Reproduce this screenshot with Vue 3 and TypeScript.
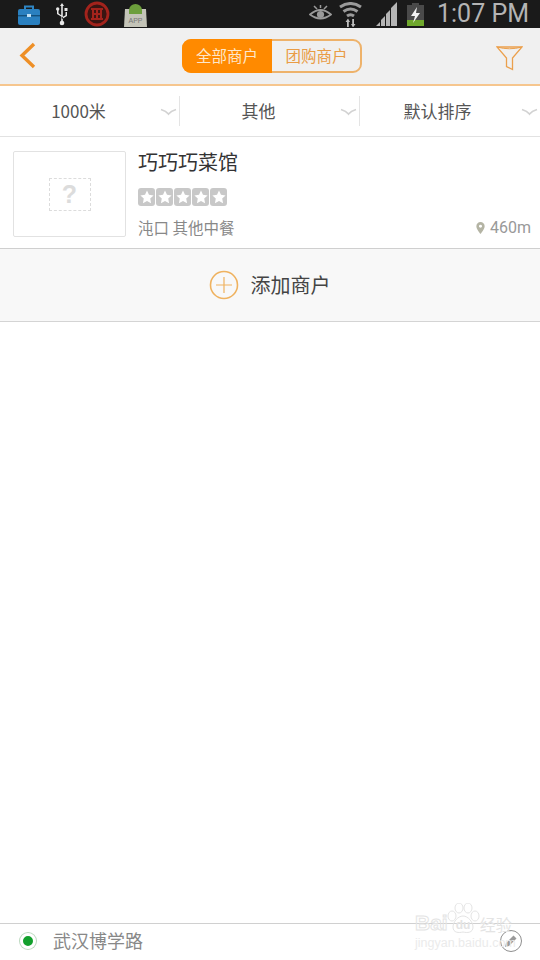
<template>
  <div class="page">
    <div class="status">
      <div class="status-left">
        <svg class="ic" width="22" height="22" viewBox="0 0 22 22">
          <path d="M7 6V3.500h8V6" fill="none" stroke="#2f86c4" stroke-width="2" />
          <rect x="0" y="6" width="22" height="16" rx="2" fill="#2a80c0" />
          <rect x="0" y="12" width="22" height="1.400" fill="#14507c" />
          <rect x="9" y="11" width="4" height="3" fill="#bfe0f5" />
        </svg>
        <svg class="ic" width="18" height="24" viewBox="0 0 18 24">
          <path d="M9 1l2 3H7zM8.200 4h1.600v16H8.200zM9 15l-5-3V8h1.500v3.200L8.500 13.500zM9 17l5-3v-4h-1.500v3.200l-4 2.300z" fill="#e8e8e8" />
          <circle cx="9" cy="21" r="2.300" fill="#e8e8e8" />
          <circle cx="4.700" cy="7" r="1.700" fill="#e8e8e8" />
          <rect x="11.500" y="6" width="3" height="3" fill="#e8e8e8" />
        </svg>
        <svg class="ic" width="26" height="26" viewBox="0 0 26 26">
          <circle cx="13" cy="13" r="11" fill="#3a1512" stroke="#a3231c" stroke-width="2.800" />
          <path d="M7 8h12M7 18h12M9 8v5h8V8M13 8v10M9 13v5M17 13v5" fill="none" stroke="#a3231c" stroke-width="2" />
        </svg>
        <svg class="ic" width="25" height="25" viewBox="0 0 25 25">
          <path d="M2 7h21l1 18H1z" fill="#c4c4b8" />
          <path d="M6 8a6.500 6 0 0 1 13 0v4H6z" fill="#6d9f3c" />
          <text x="12.500" y="21" text-anchor="middle" class="app-txt">APP</text>
        </svg>
      </div>
      <div class="status-right">
        <svg class="ic eye" width="23" height="18" viewBox="0 0 23 18">
          <path d="M1 9.500q10.500-9 21 0q-10.500 8-21 0z" fill="none" stroke="#9a9a9a" stroke-width="1.800" />
          <circle cx="11.500" cy="9.500" r="3.600" fill="#9a9a9a" />
          <path d="M5 1l3 3M11.500 0v3M18 1l-3 3" stroke="#9a9a9a" stroke-width="1.500" />
        </svg>
        <svg class="ic wifi" width="23" height="25" viewBox="0 0 23 25">
          <path d="M1 5q10.500-7 21 0M4.500 9.500q7-5 14 0M8 14q3.500-2.500 7 0" fill="none" stroke="#9a9a9a" stroke-width="3" />
          <path d="M6.500 20l2.500-3.500 2 3.500h-1.200v5H8v-5zM12 22h1.200v-5H15v5h1.500L14 25.500z" fill="#bdbdbd" />
        </svg>
        <svg class="ic signal" width="22" height="24" viewBox="0 0 22 24">
          <path d="M0 24l4-4v4zM5 24v-6l4-4v10zM10 24v-12l4-4v16zM15 24v-18l6-6v24z" fill="#b5b5b5" />
        </svg>
        <svg class="ic battery" width="17" height="23" viewBox="0 0 17 23">
          <rect x="5" y="0" width="7" height="3" fill="#4a4a4a" />
          <rect x="0" y="2" width="17" height="21" fill="#4a4a4a" />
          <rect x="0" y="17" width="17" height="6" fill="#6fa82c" />
          <path d="M10 4L4 13h4l-2 7 7-10H9z" fill="#f2f2f2" />
        </svg>
        <span class="time">1:07 PM</span>
      </div>
    </div>

    <header class="nav">
      <svg class="back" width="17" height="27" viewBox="0 0 17 27">
        <path d="M15 2L3 13.500 15 25" fill="none" stroke="#ee8f26" stroke-width="3.400" />
      </svg>
      <div class="seg">
        <span class="seg-item on">全部商户</span>
        <span class="seg-item">团购商户</span>
      </div>
      <svg class="funnel" width="27" height="25" viewBox="0 0 27 25">
        <path d="M1 1h25L16.500 12v11.500l-6-3V12z" fill="none" stroke="#eba04d" stroke-width="1.300" />
        <path d="M1 1q12.500 3.500 25 0" fill="none" stroke="#eba04d" stroke-width="1" />
      </svg>
    </header>

    <div class="filters">
      <div v-for="f in filters" :key="f" class="filter">
        <span class="filter-txt">{{ f }}</span>
        <svg class="caret" width="17" height="8" viewBox="0 0 17 8">
          <path d="M1 1.500q5 1.500 7.500 4.500q2.500-3 7.500-4.500" fill="none" stroke="#d2d2d2" stroke-width="1.800" />
        </svg>
      </div>
    </div>

    <div class="shop">
      <div class="thumb"><div class="holder">?</div></div>
      <div class="info">
        <div class="name">巧巧巧菜馆</div>
        <div class="stars">
          <span v-for="n in 5" :key="n" class="star">
            <svg width="14" height="14" viewBox="0 0 24 24">
              <path d="M12 1l3.400 7.300 7.900 1-5.800 5.400 1.500 7.900L12 18.700l-7 3.900 1.500-7.900L.7 9.300l7.900-1z" fill="#fff" />
            </svg>
          </span>
        </div>
        <div class="meta">
          <span>沌口 其他中餐</span>
          <span class="dist">
            <svg width="9" height="12" viewBox="0 0 9 13">
              <path d="M4.500 0A4.500 4.500 0 0 0 0 4.500C0 7.500 4.500 13 4.500 13S9 7.500 9 4.500A4.500 4.500 0 0 0 4.500 0z" fill="#b4b4a4" />
              <circle cx="4.500" cy="4.500" r="1.600" fill="#fff" />
            </svg>
            460m
          </span>
        </div>
      </div>
    </div>

    <div class="add">
      <svg width="30" height="30" viewBox="0 0 30 30">
        <circle cx="15" cy="15" r="13.500" fill="none" stroke="#efb25f" stroke-width="1.600" />
        <path d="M15 7v16M7 15h16" stroke="#efb25f" stroke-width="1.200" />
      </svg>
      <span class="add-txt">添加商户</span>
    </div>

    <div class="spacer"></div>

    <footer class="foot">
      <span class="dot"></span>
      <span class="addr">武汉博学路</span>
      <span class="edit">
        <svg width="16" height="16" viewBox="0 0 16 16">
          <path d="M2 14l1-4 7.500-7.500 3 3L6 13z" fill="#9a9a9a" />
        </svg>
      </span>
    </footer>

    <!-- 水印 -->
    <div class="mark">
      <div class="mark-top">
        <span class="bai">Bai</span>
        <svg class="paw" width="34" height="31" viewBox="0 0 34 31">
          <g fill="none" stroke="#e4e4e4" stroke-width="1">
            <ellipse cx="6" cy="13" rx="4" ry="5" />
            <ellipse cx="13" cy="5" rx="4" ry="5" />
            <ellipse cx="22" cy="5" rx="4" ry="5" />
            <ellipse cx="29" cy="13" rx="4" ry="5" />
            <path d="M17 13c-5 0-10 6-10 11 0 6 6 6 10 5 4 1 10 1 10-5 0-5-5-11-10-11z" />
          </g>
          <text x="17" y="26" text-anchor="middle" class="du">du</text>
        </svg>
        <span class="jy">经验</span>
      </div>
      <div class="mark-sub">jingyan.baidu.com</div>
    </div>
  </div>
</template>

<script setup lang="ts">
const filters: string[] = ['1000米', '其他', '默认排序']
</script>

<style>
html, body { margin: 0; background: #fff; }
</style>

<style scoped>
.page {
  position: relative;
  width: 540px;
  height: 960px;
  overflow: hidden;
  display: flex;
  flex-direction: column;
  background: #fff;
  font-family: "Noto Sans CJK SC", "Liberation Sans", sans-serif;
}
.status {
  height: 28px;
  flex: none;
  background: #1a1a1a;
  display: flex;
  justify-content: space-between;
  align-items: center;
  padding: 0 11px 0 18px;
}
.status-left, .status-right { display: flex; align-items: center; }
.status-left { gap: 13px; }
.ic { display: block; flex: none; }
.app-txt { font: 7px "Liberation Sans", sans-serif; fill: #777; }
.eye { margin-right: 7px; }
.wifi { margin-right: 14px; }
.signal { margin-right: 9px; }
.battery { margin-right: 13px; }
.time {
  font: 25px/28px Roboto, "Liberation Sans", sans-serif;
  color: #b4b4b4;
}
.nav {
  height: 58px;
  flex: none;
  box-sizing: border-box;
  background: #f0f0f0;
  border-bottom: 2px solid #f6c68e;
  display: flex;
  align-items: center;
  justify-content: space-between;
  padding: 0 17px 0 19px;
}
.back { display: block; margin-bottom: 1px; }
.funnel { display: block; margin-top: 4px; }
.seg {
  width: 180px;
  height: 34px;
  box-sizing: border-box;
  border: 2px solid #eeb26a;
  border-radius: 9px;
  display: flex;
  margin-left: 12px;
}
.seg-item {
  flex: 1;
  text-align: center;
  font-size: 15.5px;
  line-height: 28px;
  padding-left: 1px;
  color: #e99c45;
}
.seg-item.on {
  flex: none;
  width: 90px;
  margin: -2px 0 -2px -2px;
  padding-left: 0;
  line-height: 32px;
  border-radius: 9px 0 0 9px;
  background: #ff8a00;
  color: #fde7cb;
}
.filters {
  height: 51px;
  flex: none;
  box-sizing: border-box;
  border-bottom: 1px solid #e2e2e2;
  display: flex;
  align-items: center;
}
.filter {
  position: relative;
  width: 180px;
  height: 30px;
  box-sizing: border-box;
  display: flex;
  align-items: center;
  justify-content: center;
  border-right: 1px solid #e4e4e4;
  font-size: 17px;
  color: #555;
  padding-right: 22px;
}
.filter:last-child { border-right: 0; padding-right: 25px; }
.filter-txt { margin-bottom: 2px; }
.caret { position: absolute; right: 2px; top: 12px; }
.shop {
  height: 112px;
  flex: none;
  box-sizing: border-box;
  border-bottom: 1px solid #cfcfcf;
  display: flex;
  align-items: flex-start;
  padding: 14px 9px 0 13px;
}
.thumb {
  width: 113px;
  height: 86px;
  flex: none;
  box-sizing: border-box;
  border: 1px solid #e2e2e2;
  border-radius: 2px;
  display: flex;
  align-items: center;
  justify-content: center;
}
.holder {
  width: 42px;
  height: 33px;
  box-sizing: border-box;
  border: 1px dashed #dcdcdc;
  text-align: center;
  font: bold 25px/31px "Liberation Sans", sans-serif;
  color: #dcdcdc;
}
.info {
  flex: 1;
  margin-left: 12px;
  height: 86px;
  display: flex;
  flex-direction: column;
}
.name {
  margin-top: -2px;
  font-size: 20px;
  line-height: 26px;
  color: #333;
}
.stars { display: flex; gap: 1px; margin-top: 13px; }
.star {
  width: 17px;
  height: 18px;
  background: #c8c8c8;
  border-radius: 3px;
  display: flex;
  align-items: center;
  justify-content: center;
}
.meta {
  display: flex;
  justify-content: space-between;
  align-items: center;
  margin-top: 9px;
  font-size: 15.5px;
  line-height: 22px;
  color: #888;
}
.dist {
  display: flex;
  align-items: center;
  gap: 5px;
  padding-top: 2px;
  font-family: Roboto, "Liberation Sans", sans-serif;
  font-size: 16px;
  color: #999;
}
.add {
  height: 73px;
  flex: none;
  box-sizing: border-box;
  background: #f8f8f8;
  border-bottom: 1px solid #d4d4d4;
  display: flex;
  align-items: center;
  justify-content: center;
  gap: 12px;
  padding-right: 1px;
  font-size: 20px;
  color: #444;
}
.add-txt { margin-bottom: 2px; }
.spacer { flex: 1; }
.foot {
  height: 37px;
  flex: none;
  box-sizing: border-box;
  border-top: 1px solid #d0d0d0;
  display: flex;
  align-items: center;
  padding: 0 18px 2px 20px;
  font-size: 18px;
  color: #888;
}
.dot {
  width: 10px;
  height: 10px;
  border-radius: 50%;
  background: #12a02c;
  border: 3px solid #fff;
  box-shadow: 0 0 0 1px #bcd9c0;
}
.addr { margin-left: 17px; margin-bottom: 2px; flex: 1; }
.edit {
  width: 20px;
  height: 20px;
  border: 1px solid #8f8f8f;
  border-radius: 50%;
  display: flex;
  align-items: center;
  justify-content: center;
  background: #fff;
}
.mark {
  position: absolute;
  left: 415px;
  top: 903px;
  width: 100px;
  pointer-events: none;
}
.mark-top {
  display: flex;
  align-items: flex-end;
  height: 31px;
}
.bai {
  font: bold 21px/22px "Liberation Sans", sans-serif;
  color: transparent;
  -webkit-text-stroke: 1px #e4e4e4;
  margin-right: -8px;
}
.paw { flex: none; margin-left: 6px; }
.du { font: bold 12px "Liberation Sans", sans-serif; fill: #e4e4e4; }
.jy {
  font-size: 16px;
  line-height: 20px;
  color: #e4e4e4;
  white-space: nowrap;
}
.mark-sub {
  margin-top: 2px;
  font: 12.5px/14px "Liberation Sans", sans-serif;
  white-space: nowrap;
  color: #ebebeb;
}
</style>
